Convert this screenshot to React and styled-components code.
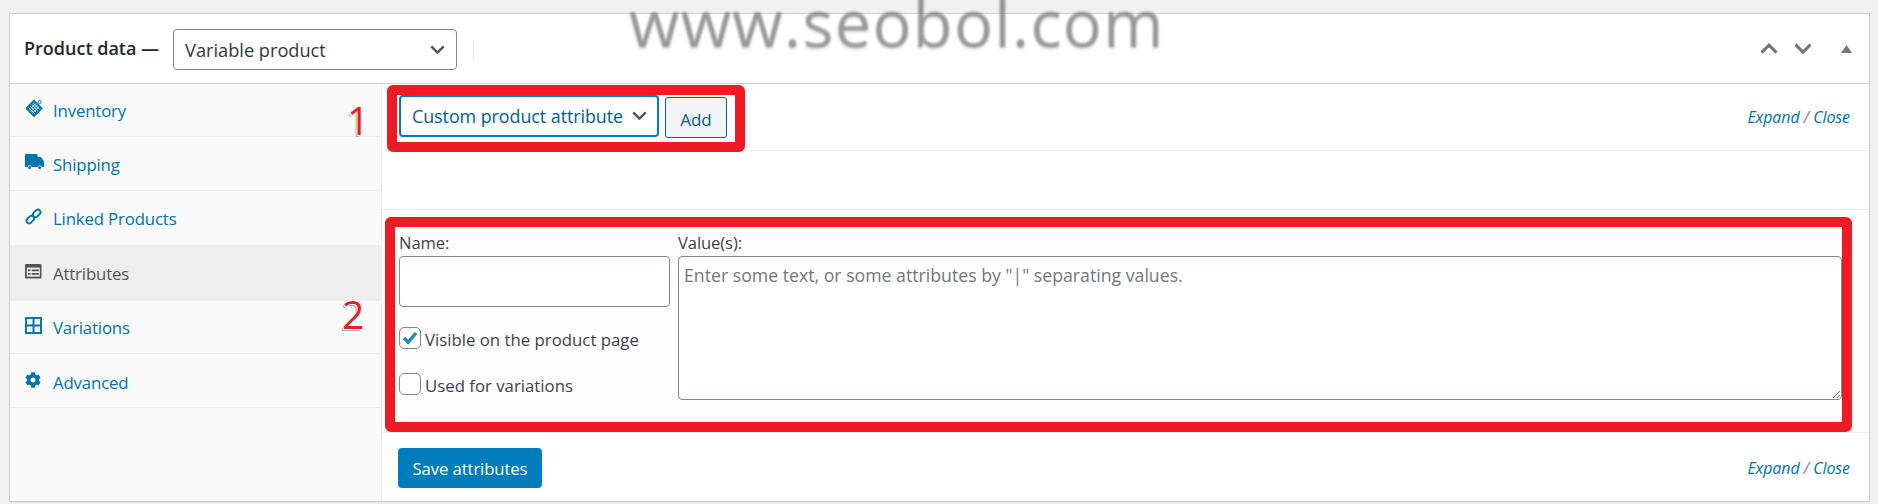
import React from 'react';
import styled, { createGlobalStyle } from 'styled-components';
import { FaCog } from 'react-icons/fa';

const Global = createGlobalStyle`
  html, body { margin: 0; padding: 0; background: #f1f1f1; }
  body { font-family: "Open Sans", "Noto Sans", sans-serif; color: #3c434a; overflow: hidden; }
  * { box-sizing: border-box; }
`;
const Page = styled.div`height: 504px; padding: 13px 8px 2px 9px;`;
const Panel = styled.section`
  position: relative; height: 489px; background: #fff; border: 1px solid #ccd0d4;
  display: flex; flex-direction: column; box-shadow: 0 1px 1px rgba(0,0,0,.04);
`;
const Header = styled.header`
  height: 70px; flex: none; border-bottom: 1px solid #ccd0d4; display: flex; align-items: center; padding: 0 17px 0 14px;
`;
const Title = styled.h2`
  margin: 0 14px 0 0; font-size: 18px; font-weight: 600; color: #23282d; position: relative; top: -1px; white-space: nowrap; letter-spacing: 0;
`;
const TypeSelect = styled.div`
  width: 284px; height: 41px; border: 1px solid #7e8993; border-radius: 4px; display: flex; align-items: center; justify-content: space-between;
  padding: 0 11px; font-size: 18.2px; color: #32373c; font-weight: 500; position: relative; top: 1px;
`;
const Divider = styled.span`width: 1px; height: 21px; background: #e6e6e6; margin-left: 16px; position: relative; top: 2px;`;
const Controls = styled.div`margin-left: auto; display: flex; align-items: center; color: #72777c;`;
const ControlGap = styled.span`width: ${p => p.$w}px;`;
const Body = styled.div`flex: 1; display: flex; min-height: 0;`;
const Sidebar = styled.nav`width: 372px; flex: none; background: #fafafa; border-right: 1px solid #eee;`;
const NavItem = styled.a`
  height: ${p => p.$h}px; display: flex; align-items: center; padding: ${p => p.$pad}px 0 0 15px; border-bottom: 1px solid #eee;
  font-size: 16.8px; letter-spacing: -.15px; color: ${p => p.$active ? '#555' : '#0073aa'}; background: ${p => p.$active ? '#eee' : 'transparent'};
`;
const NavIcon = styled.span`width: 28px; height: 24px; display: flex; align-items: center; justify-content: flex-start; position: relative; top: -2px; flex: none;`;
const Main = styled.main`flex: 1; min-width: 0; display: flex; flex-direction: column;`;
const Toolbar = styled.div`
  height: 67px; flex: none; border-bottom: 1px solid #eee; display: flex; align-items: center; padding: 0 19px 0 17px;
`;
const AttrSelect = styled.div`
  align-self: flex-start; margin: 11px 6px 0 0;
  width: 260px; height: 42px; border: 2px solid #007cba; border-radius: 4px; display: flex; align-items: center; justify-content: space-between;
  padding: 0 10px 0 11px; font-size: 17.9px; letter-spacing: -.06px; color: #016087; white-space: nowrap;
`;
const AddButton = styled.button`
  align-self: flex-start; margin-top: 13px;
  width: 62px; height: 41px; background: #f3f5f6; border: 1px solid #016087; border-radius: 3px; color: #016087;
  font: 400 17px "Open Sans", sans-serif; padding: 4px 0 0;
`;
const ExpandClose = styled.span`
  margin-left: auto; font-size: 16px; font-style: italic; color: #0073aa; letter-spacing: -.1px; white-space: nowrap;
`;
const Slash = styled.span`color: #888;`;
const Spacer = styled.div`height: 59px; flex: none; border-bottom: 1px solid #eee;`;
const AttrForm = styled.div`
  height: 223px; flex: none; background: #fdfdfd; border-bottom: 1px solid #eee; padding: 20px 17px 0;
  display: grid; grid-template-columns: 271px 1fr; column-gap: 8px; grid-template-rows: 26px 1fr;
`;
const FieldLabel = styled.label`font-size: 16.6px; letter-spacing: -.1px; color: #3c434a; line-height: 25px;`;
const NameColumn = styled.div`display: flex; flex-direction: column;`;
const NameInput = styled.input`
  width: 271px; height: 51px; border: 1px solid #7e8993; border-radius: 4px; background: #fff; flex: none; margin-bottom: 20px; outline: none;
`;
const CheckRow = styled.div`display: flex; align-items: center; height: 22px; margin-bottom: 24px; font-size: 16.8px; color: #3c434a; gap: 4px; white-space: nowrap;`;
const CheckText = styled.span`position: relative; top: 1px;`;
const CheckBox = styled.span`
  width: 22px; height: 22px; border: 1px solid #7e8993; border-radius: 5px; background: #fff; display: flex; align-items: center; justify-content: center; flex: none;
`;
const Values = styled.textarea`
  width: 1164px; height: 144px; border: 1px solid #7e8993; border-radius: 4px; padding: 6px 5px; font: 400 17.7px "Open Sans", sans-serif; background: #fff; outline: none;
  &::placeholder { color: #72777c; opacity: 1; }
`;
const Footer = styled.div`flex: 1; display: flex; align-items: center; padding: 2px 19px 0 16px;`;
const SaveButton = styled.button`
  width: 144px; height: 40px; background: #007cba; color: #fff; border: 0; border-radius: 4px; font: 400 16.7px "Open Sans", sans-serif; letter-spacing: -.1px; padding: 0;
`;
const Highlight = styled.div`
  position: absolute; border: 10px solid #ed1c24; border-radius: 6px; pointer-events: none;
  left: ${p => p.$l}px; top: ${p => p.$t}px; width: ${p => p.$w}px; height: ${p => p.$h}px;
`;
const Mark = styled.span`
  position: absolute; left: ${p => p.$l}px; top: ${p => p.$t}px; color: #ed1c24; font: 400 39px/1 "Open Sans", sans-serif;
  text-shadow: -1px 1px 0 #fff, -2px 2px 0 #aaa;
`;
const Watermark = styled.div`
  position: absolute; left: 629px; top: -14px; font: 400 65px/72px "Open Sans", sans-serif; letter-spacing: 1.3px; white-space: nowrap; pointer-events: none;
  color: rgba(110,110,110,.6); filter: blur(1px); text-shadow: 0 2px 2px rgba(120,120,120,.3);
`;

const Chevron = ({ size = 16, dir = 'down', w = 3, color = '#555' }) => (
  <svg width={size} height={size * 0.62} viewBox="0 0 18 11" fill="none" stroke={color} strokeWidth={w}>
    <path d={dir === 'down' ? 'M1.5 1.5 9 9l7.5-7.5' : 'M1.5 9.5 9 2l7.5 7.5'} />
  </svg>
);
const InventoryIcon = () => (
  <svg width="18" height="18" viewBox="0 0 18 18">
    <g transform="rotate(45 9 9)">
      <rect x="3" y="3" width="12.5" height="12.5" rx=".8" fill="#0073aa" />
      <path d="M5 6h8.5M5 8.2h8.5M5 10.4h8.5M5 12.6h8.5M7.2 4.5v9.5M9.4 4.5v9.5M11.6 4.5v9.5" stroke="#fff" strokeWidth=".8" />
    </g>
    <circle cx="14.6" cy="3" r="1.6" fill="#fff" stroke="#0073aa" strokeWidth=".9" />
  </svg>
);
const TruckIcon = () => (
  <svg width="19" height="16" viewBox="0 0 19 16">
    <path d="M0 0h12.5v3H16l3 4.5V13h-2.2a2.1 2.1 0 0 0-4.1 0H6.6a2.1 2.1 0 0 0-4.1 0H0z" fill="#0073aa" />
    <circle cx="4.5" cy="13.6" r="1.5" fill="#0073aa" />
    <circle cx="14.7" cy="13.6" r="1.5" fill="#0073aa" />
  </svg>
);
const LinkIcon = () => (
  <svg width="17" height="17" viewBox="0 0 17 17" fill="none" stroke="#0073aa" strokeWidth="1.9">
    <rect x="-3.8" y="-2.6" width="8.5" height="5.2" rx="2.6" transform="translate(5 12) rotate(-45)" />
    <rect x="-4.7" y="-2.6" width="8.5" height="5.2" rx="2.6" transform="translate(12 5) rotate(-45)" />
  </svg>
);
const AttributesIcon = () => (
  <svg width="17" height="15" viewBox="0 0 17 15">
    <rect width="16.5" height="14.5" rx="1" fill="#555" />
    <rect x="1.8" y="3.6" width="13" height="9" fill="#eee" />
    <path d="M3 5.5h2.5v1.8H3zM3 8.9h2.5v1.8H3zM6.8 5.5h7v1.8h-7zM6.8 8.9h7v1.8h-7z" fill="#555" />
  </svg>
);
const GridIcon = () => (
  <svg width="17" height="17" viewBox="0 0 17 17" fill="none" stroke="#0073aa" strokeWidth="1.9">
    <rect x="1" y="1" width="15" height="15" />
    <path d="M8.5 1v15M1 8.5h15" />
  </svg>
);
const CheckMark = () => (
  <svg width="16" height="14" viewBox="0 0 16 14" fill="none" stroke="#1e8cbe" strokeWidth="3.4">
    <path d="M2 7l4.3 4.2L14 2" />
  </svg>
);
const Triangle = () => (
  <svg width="11" height="8" viewBox="0 0 11 8"><path d="M5.5 0 11 8H0z" fill="#72777c" /></svg>
);

const nav = [
  ['Inventory', <InventoryIcon />, 53, 0],
  ['Shipping', <TruckIcon />, 54, 1],
  ['Linked Products', <LinkIcon />, 55, 1],
  ['Attributes', <AttributesIcon />, 55, 1, true],
  ['Variations', <GridIcon />, 53, 1],
  ['Advanced', <FaCog size={16} color="#0073aa" />, 54, 3],
];

export default function App() {
  return (
    <Page>
      <Global />
      <Panel>
        <Header>
          <Title>Product data —</Title>
          <TypeSelect>Variable product<Chevron size={15} /></TypeSelect>
          <Divider />
          <Controls>
            <Chevron size={18} dir="up" color="#72777c" />
            <ControlGap $w={16} />
            <Chevron size={18} color="#72777c" />
            <ControlGap $w={29} />
            <Triangle />
          </Controls>
        </Header>
        <Body>
          <Sidebar>
            {nav.map(([label, icon, h, pad, active]) => (
              <NavItem key={label} $h={h} $pad={pad} $active={active}>
                <NavIcon>{icon}</NavIcon>{label}
              </NavItem>
            ))}
          </Sidebar>
          <Main>
            <Toolbar>
              <AttrSelect>Custom product attribute<Chevron size={15} /></AttrSelect>
              <AddButton>Add</AddButton>
              <ExpandClose>Expand <Slash>/</Slash> Close</ExpandClose>
            </Toolbar>
            <Spacer />
            <AttrForm>
              <FieldLabel>Name:</FieldLabel>
              <FieldLabel>Value(s):</FieldLabel>
              <NameColumn>
                <NameInput />
                <CheckRow><CheckBox><CheckMark /></CheckBox><CheckText>Visible on the product page</CheckText></CheckRow>
                <CheckRow><CheckBox /><CheckText>Used for variations</CheckText></CheckRow>
              </NameColumn>
              <Values placeholder={'Enter some text, or some attributes by "|" separating values.'} />
            </AttrForm>
            <Footer>
              <SaveButton>Save attributes</SaveButton>
              <ExpandClose>Expand <Slash>/</Slash> Close</ExpandClose>
            </Footer>
          </Main>
        </Body>
        <Highlight $l={377} $t={71} $w={358} $h={67} />
        <Highlight $l={375} $t={203} $w={1467} $h={215} />
        <Mark $l={337} $t={86}>1</Mark>
        <Mark $l={332} $t={280}>2</Mark>
      </Panel>
      <Watermark>www.seobol.com</Watermark>
    </Page>
  );
}
